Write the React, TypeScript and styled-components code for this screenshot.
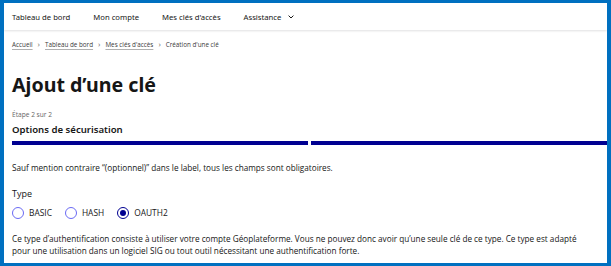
import React from 'react'
import styled, { createGlobalStyle } from 'styled-components'

const GlobalStyle = createGlobalStyle`
  * { box-sizing: border-box; }
  html, body { margin: 0; padding: 0; background: #ffffff; }
  body { font-family: "Open Sans", "Noto Sans", sans-serif; color: #161616; }
`

const Frame = styled.div`
  width: 611px;
  height: 266px;
  overflow: hidden;
  border-style: solid;
  border-color: #0070c0;
  border-width: 3px 4px 3px 4px;
  background: #ffffff;
  display: flex;
  flex-direction: column;
`

const Header = styled.nav`
  height: 27px;
  flex-shrink: 0;
  display: flex;
  align-items: center;
  gap: 23px;
  padding-left: 8px;
  box-shadow: 0 1px 2px rgba(0, 0, 18, 0.12);
  position: relative;
  z-index: 1;
`

const NavItem = styled.span`
  font-family: "Noto Sans", sans-serif;
  font-size: 7.7px;
  font-weight: 400;
  color: #161616;
  display: flex;
  align-items: center;
  gap: 7px;
`

const Main = styled.main`
  padding-left: 8px;
  display: flex;
  flex-direction: column;
`

const Breadcrumb = styled.div`
  margin-top: 8px;
  height: 12px;
  display: flex;
  align-items: center;
  gap: 5px;
  font-size: 6.3px;
  color: #3a3a3a;
`

const Crumb = styled.a`
  color: #3a3a3a;
  text-decoration: underline;
  text-decoration-color: #b0b0b0;
  text-underline-offset: 2px;
`

const Sep = styled.span`
  font-size: 8px;
  line-height: 8px;
  color: #666666;
`

const Title = styled.h1`
  margin: 22px 0 0 0;
  font-family: "Noto Sans", sans-serif;
  font-size: 19.6px;
  font-weight: 700;
  line-height: 26px;
  color: #161616;
`

const StepLabel = styled.div`
  margin-top: 12px;
  font-size: 6.6px;
  line-height: 10px;
  color: #666666;
`

const StepTitle = styled.div`
  margin-top: 3px;
  font-family: "Noto Sans", sans-serif;
  font-size: 9.6px;
  font-weight: 600;
  line-height: 14px;
`

const Steps = styled.div`
  margin-top: 4px;
  display: flex;
  gap: 3px;
`

const StepBar = styled.div<{ $done: boolean }>`
  width: 296px;
  height: 4px;
  flex-shrink: 0;
  background: ${(p) => (p.$done ? '#000091' : '#dddddd')};
`

const Notice = styled.p`
  margin: 17px 0 0 0;
  font-size: 8.2px;
  line-height: 12px;
  color: #161616;
`

const Legend = styled.div`
  margin-top: 14px;
  font-size: 9px;
  line-height: 12px;
`

const RadioGroup = styled.div`
  margin-top: 6px;
  display: flex;
  gap: 13px;
`

const RadioLabel = styled.label`
  display: flex;
  align-items: center;
  gap: 5px;
  font-size: 8.4px;
  line-height: 14px;
  color: #161616;
`

const Circle = styled.span<{ $checked: boolean }>`
  width: 12px;
  height: 12px;
  border-radius: 50%;
  border: 1px solid ${(p) => (p.$checked ? '#000091' : '#6a6af4')};
  display: flex;
  align-items: center;
  justify-content: center;
  &::after {
    content: '';
    width: 6px;
    height: 6px;
    border-radius: 50%;
    background: ${(p) => (p.$checked ? '#000091' : 'transparent')};
  }
`

const Description = styled.p`
  margin: 13px 0 0 0;
  font-size: 8.2px;
  line-height: 12px;
  color: #161616;
  width: 572px;
`

const Chevron = () => (
  <svg width="6" height="4" viewBox="0 0 6 4" fill="none">
    <path d="M0.6 0.6 L3 3 L5.4 0.6" stroke="#161616" strokeWidth="1" />
  </svg>
)

const types = ['BASIC', 'HASH', 'OAUTH2']

export default function App() {
  return (
    <>
      <GlobalStyle />
      <Frame>
        <Header>
          <NavItem>Tableau de bord</NavItem>
          <NavItem>Mon compte</NavItem>
          <NavItem>Mes clés d'accès</NavItem>
          <NavItem>
            Assistance <Chevron />
          </NavItem>
        </Header>
        <Main>
          <Breadcrumb>
            <Crumb>Accueil</Crumb>
            <Sep>›</Sep>
            <Crumb>Tableau de bord</Crumb>
            <Sep>›</Sep>
            <Crumb>Mes clés d'accès</Crumb>
            <Sep>›</Sep>
            <span>Création d'une clé</span>
          </Breadcrumb>
          <Title>Ajout d’une clé</Title>
          <StepLabel>Étape 2 sur 2</StepLabel>
          <StepTitle>Options de sécurisation</StepTitle>
          <Steps>
            <StepBar $done />
            <StepBar $done />
          </Steps>
          <Notice>
            Sauf mention contraire “(optionnel)” dans le label, tous les champs sont obligatoires.
          </Notice>
          <Legend>Type</Legend>
          <RadioGroup>
            {types.map((t) => (
              <RadioLabel key={t}>
                <Circle $checked={t === 'OAUTH2'} />
                {t}
              </RadioLabel>
            ))}
          </RadioGroup>
          <Description>
            Ce type d’authentification consiste à utiliser votre compte Géoplateforme. Vous ne pouvez donc avoir
            qu’une seule clé de ce type. Ce type est adapté pour une utilisation dans un logiciel SIG ou tout outil
            nécessitant une authentification forte.
          </Description>
        </Main>
      </Frame>
    </>
  )
}
